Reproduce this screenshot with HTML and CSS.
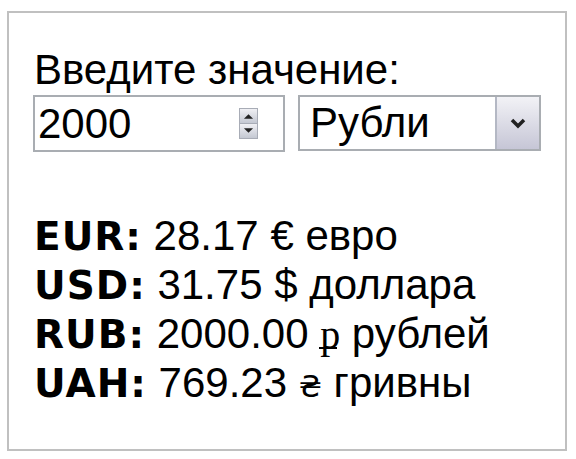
FILE: index.html
```html
<!DOCTYPE html>
<html lang="ru">
<head>
<meta charset="utf-8">
<link rel="stylesheet" href="styles.css">
</head>
<body>
<div class="box">
  <div class="label">Введите значение:</div>
  <div class="controls">
    <div class="num">
      <span class="num-val">2000</span>
      <span class="spin">
        <span class="spin-btn"><svg width="12" height="6" viewBox="0 0 12 6"><path d="M1 6 L6 1 L11 6 Z" fill="#222"/></svg></span>
        <span class="spin-btn"><svg width="12" height="6" viewBox="0 0 12 6"><path d="M1 0 L6 5 L11 0 Z" fill="#222"/></svg></span>
      </span>
    </div>
    <div class="sel">
      <span class="sel-val">Рубли</span>
      <span class="sel-btn"><svg width="16" height="12" viewBox="0 0 16 12"><path d="M2 3 L8 9 L14 3" fill="none" stroke="#222" stroke-width="3.5"/></svg></span>
    </div>
  </div>
  <div class="results">
    <div class="row"><b>EUR:</b> 28.17 € евро</div>
    <div class="row"><b>USD:</b> 31.75 $ доллара</div>
    <div class="row"><b>RUB:</b> 2000.00 <span class="rub">р</span> рублей</div>
    <div class="row"><b>UAH:</b> 769.23 <span class="uah">₴</span> гривны</div>
  </div>
</div>
</body>
</html>
```
FILE: styles.css
```css
html, body { margin: 0; padding: 0; background: #fff; }
body { font-family: "Liberation Sans", Arial, sans-serif; color: #000; }
.box {
  margin: 11px 0 0 7px;
  width: 556px;
  height: 436px;
  border: 2px solid #c0c0c0;
  box-sizing: content-box;
  padding: 0;
}
.label { font-size: 42px; margin: 34px 0 0 25px; line-height: 46px; }
.controls { display: flex; gap: 13px; margin: 2px 0 0 24px; }
.num {
  width: 252px; height: 57px; box-sizing: border-box;
  border: 2px solid #a9adb2; display: flex; align-items: center; justify-content: space-between;
  padding: 0 25px 0 3px;
}
.num-val, .sel-val { font-size: 42px; line-height: 46px; }
.spin { display: flex; flex-direction: column; width: 17px; border: 1px solid #a8acb6; }
.spin-btn { height: 14px; display: flex; align-items: center; justify-content: center; background: linear-gradient(#f0f0f4, #c4c8d2); }
.spin-btn + .spin-btn { border-top: 1px solid #a8acb6; }
.spin-btn svg { width: 11px; height: 6px; }
.sel {
  width: 243px; height: 56px; box-sizing: border-box;
  border: 2px solid #a9adb2; display: flex; align-items: stretch; justify-content: space-between;
  padding-left: 10px;
}
.sel-val { align-self: center; }
.sel-btn {
  width: 42px; border-left: 2px solid #b4b8c4;
  background: linear-gradient(#f2f2f6, #c6c6d6);
  display: flex; align-items: center; justify-content: center;
}
.results { margin: 60px 0 0 25px; font-size: 42px; }
.row { line-height: 48px; white-space: nowrap; }
.row b { font-family: "DejaVu Sans", sans-serif; font-weight: bold; font-size: 39px; letter-spacing: 1px; }
.rub { font-family: "Liberation Serif", serif; font-size: 40px; position: relative; }
.rub::after { content: ""; position: absolute; left: -1px; right: 3px; bottom: 8px; height: 2px; background: #000; }
.uah { font-family: "DejaVu Sans", sans-serif; font-size: 30px; }
```
